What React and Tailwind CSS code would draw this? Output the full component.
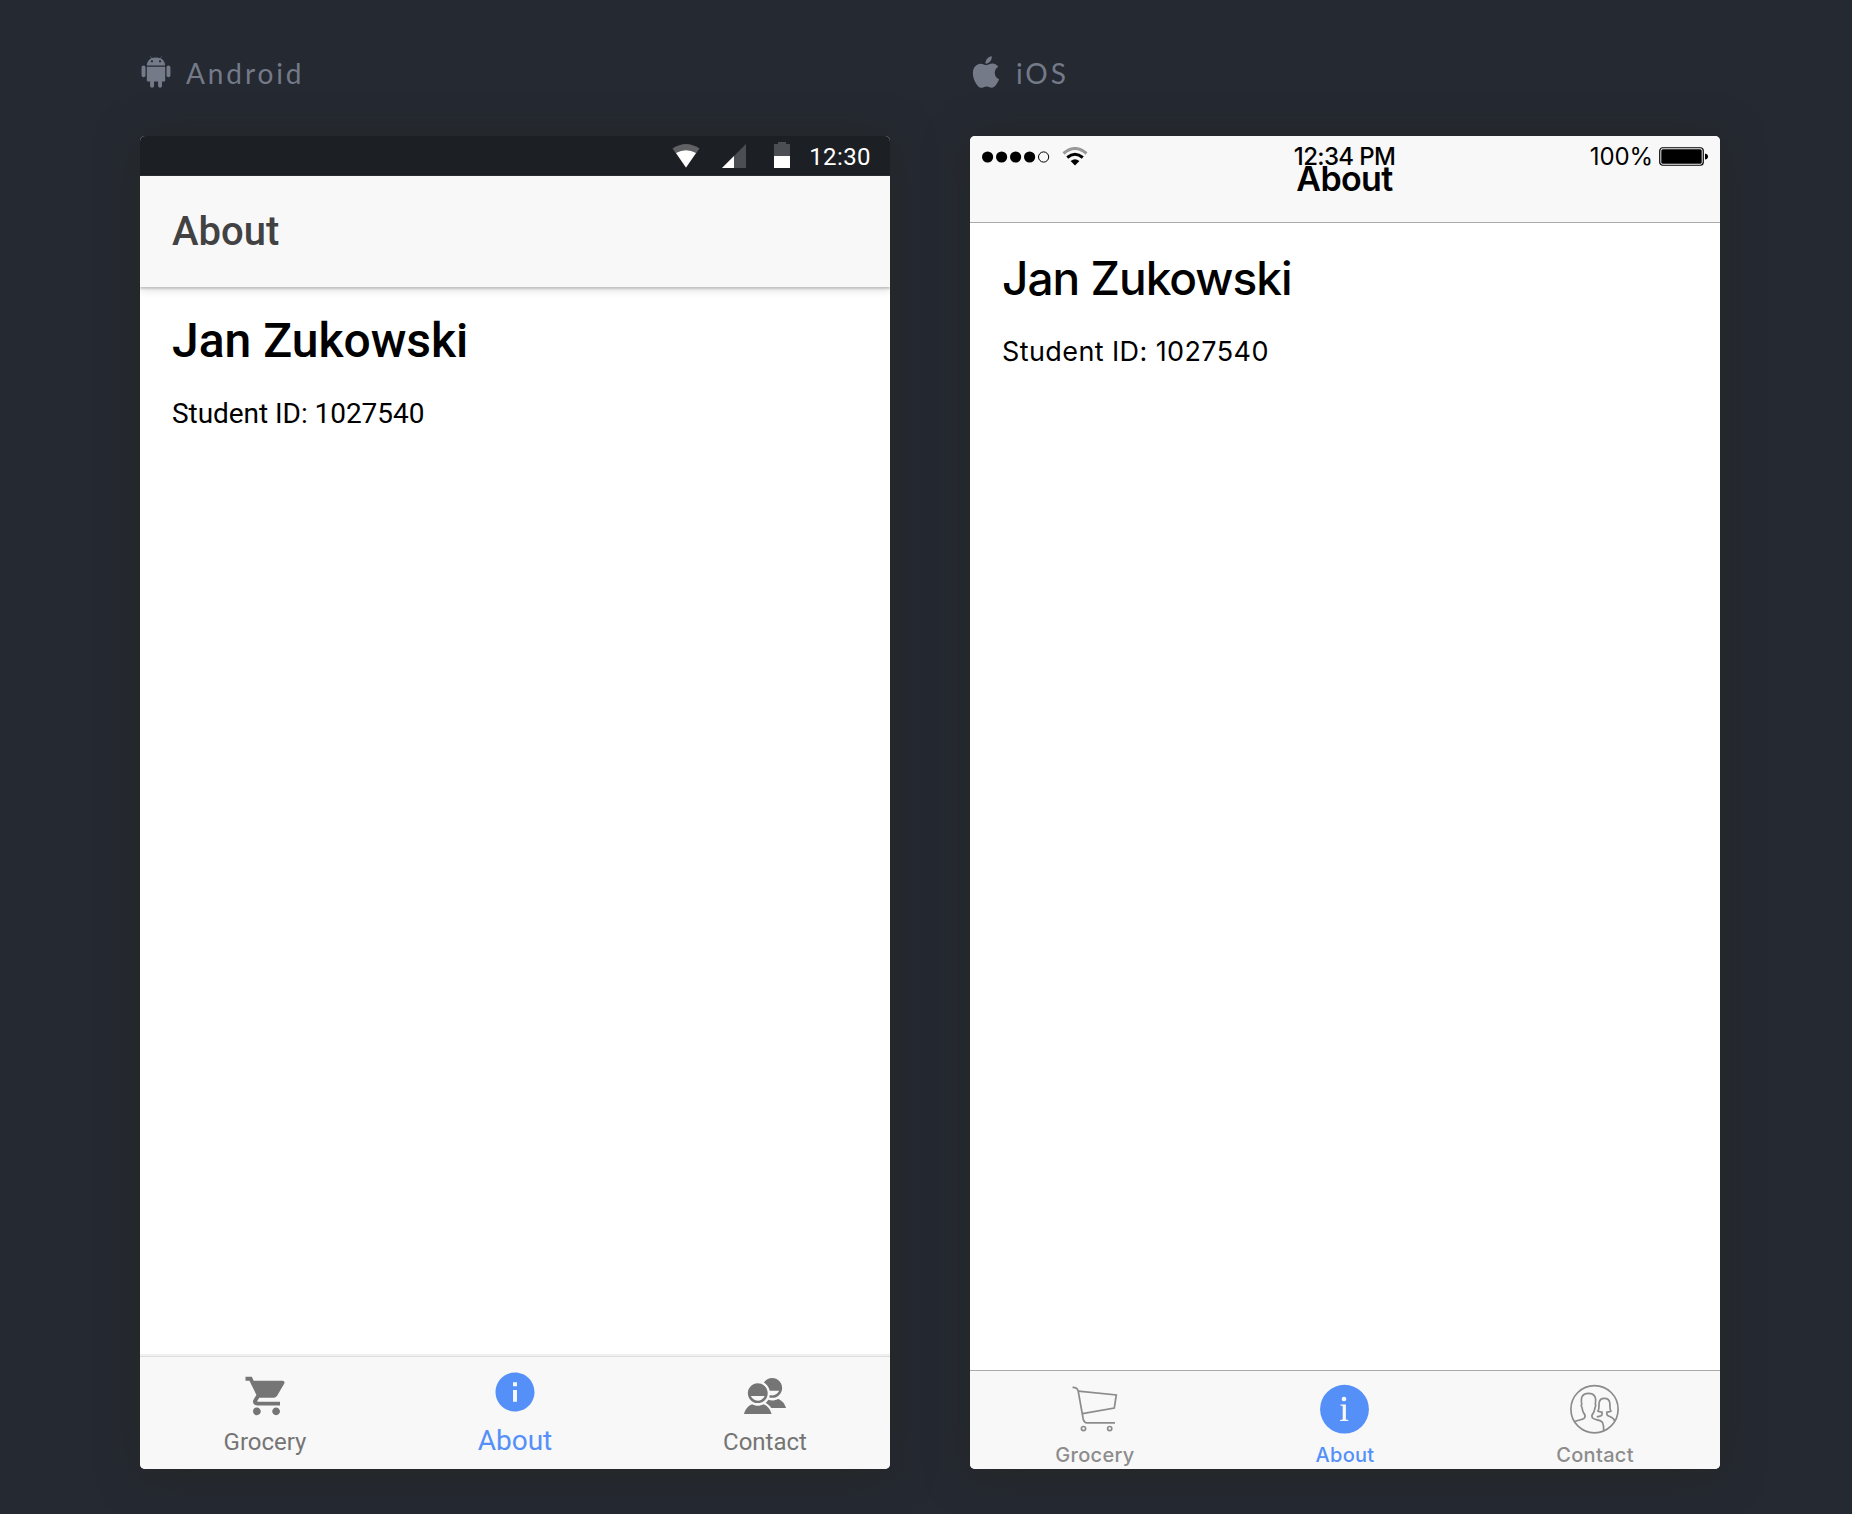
import React from "react";
import {
  IoLogoAndroid,
  IoLogoApple,
  IoMdCart,
  IoMdContacts,
  IoMdInformationCircle,
} from "react-icons/io";

function PlatformLabel({ icon, name }) {
  return (
    <div className="flex h-[136px] items-start text-[#747a88]">
      <div className="mt-[54px] flex h-9 w-8 items-center justify-center">{icon}</div>
      <span className="ml-[14px] mt-[55px] font-[Lato] text-[28px] leading-9 tracking-[2.9px]">
        {name}
      </span>
    </div>
  );
}

function AndroidStatusBar() {
  return (
    <div className="flex h-10 items-center border-b border-[#2a2d31] bg-[#1c1f24] pr-[19px] text-white">
      <svg className="ml-auto" width="28" height="24" viewBox="0 0 28 24">
        <path d="M.5 4.5Q14-4.500 27.500 4.500L14 23.500Z" fill="#5f6164" />
        <path d="M4 9Q14 3.500 24 9L14 23.500Z" fill="#fff" />
      </svg>
      <svg className="ml-[22px]" width="24" height="24" viewBox="0 0 24 24">
        <path d="M24 0V24H0Z" fill="#4b4e52" />
        <path d="M12 12V24H0Z" fill="#fff" />
      </svg>
      <svg className="mb-px ml-7" width="16" height="26" viewBox="0 0 16 26">
        <path d="M4 0h8v2h4v12H0V2h4z" fill="#4b4e52" />
        <path d="M0 14h16v12H0z" fill="#fff" />
      </svg>
      <span className="ml-[19px] mt-[3px] text-2xl leading-7 tracking-[0.4px]">12:30</span>
    </div>
  );
}

function AndroidTab({ icon, label, active }) {
  return active ? (
    <div className="flex flex-1 flex-col items-center pt-[11px] text-[#5490f8]">
      {icon}
      <span className="mt-[9px] text-[28px] leading-8">{label}</span>
    </div>
  ) : (
    <div className="flex flex-1 flex-col items-center pt-[15px] text-[#757575]">
      {icon}
      <span className="mt-[8px] text-2xl leading-7">{label}</span>
    </div>
  );
}

function AndroidDevice() {
  return (
    <div className="flex h-[1333px] w-[750px] flex-col overflow-hidden rounded-[5px] bg-white font-[Roboto] shadow-[0_4px_40px_rgba(36,40,36,0.9)]">
      <AndroidStatusBar />
      <header className="relative flex h-[111px] items-center bg-[#f8f8f8] pl-8 pt-px shadow-[0_2px_2px_rgba(0,0,0,0.18),0_4px_8px_rgba(0,0,0,0.1)]">
        <h1 className="text-[40px] font-medium leading-[48px] text-[#424242]">About</h1>
      </header>
      <main className="flex-1 px-8 pt-[26px]">
        <h2 className="text-[48px] font-medium leading-[56px] text-black">Jan Zukowski</h2>
        <p className="mt-[28px] text-[28px] leading-[34px] tracking-[-0.05px] text-black">Student ID: 1027540</p>
      </main>
      <nav className="flex h-[113px] border-t border-[#dedede] bg-[#f8f8f8] shadow-[0_-2px_1px_rgba(0,0,0,0.06)]">
        <AndroidTab icon={<IoMdCart size={48} />} label="Grocery" />
        <AndroidTab icon={<IoMdInformationCircle size={48} />} label="About" active />
        <AndroidTab icon={<IoMdContacts size={48} />} label="Contact" />
      </nav>
    </div>
  );
}

function IosStatusBar() {
  return (
    <div className="absolute inset-x-0 top-0 grid h-[41px] grid-cols-3 items-center text-2xl leading-7">
      <div className="flex items-center pl-3">
        <svg width="68" height="12" viewBox="0 0 68 12">
          <circle cx="5.600" cy="6" r="5.600" />
          <circle cx="19.600" cy="6" r="5.600" />
          <circle cx="33.600" cy="6" r="5.600" />
          <circle cx="47.600" cy="6" r="5.600" />
          <circle cx="61.600" cy="6" r="5.100" fill="none" stroke="#000" />
        </svg>
        <svg className="ml-3" width="26" height="19" viewBox="0 0 26 19" fill="none">
          <path d="M1.500 6.500Q13-3.500 24.500 6.500" stroke="#999" strokeWidth="3" />
          <path d="M5.200 10.500Q13 4 20.800 10.500" stroke="#000" strokeWidth="3" />
          <path d="M8.600 14Q13 10.500 17.400 14L13 18.500Z" fill="#000" />
        </svg>
      </div>
      <span className="-ml-px text-center font-medium tracking-[-0.65px]">12:34 PM</span>
      <div className="flex items-center justify-end pr-[11px]">
        <span className="tracking-[-0.1px]">100%</span>
        <svg className="ml-1.5 mt-px" width="50" height="20" viewBox="0 0 50 20">
          <rect x=".75" y=".75" width="43.500" height="17.500" rx="3" fill="none" stroke="#000" strokeWidth="1.200" />
          <rect x="2.300" y="2.300" width="40.400" height="14.400" rx="1.500" />
          <path d="M46 6.500Q49 7 49 9.500T46 12.500Z" />
        </svg>
      </div>
    </div>
  );
}

function CartOutline() {
  return (
    <svg width="60" height="60" viewBox="0 0 60 60" fill="none" stroke="currentColor" strokeWidth="1.700">
      <path d="M7.500 8.400C11 8.300 12.500 9 13.200 12L18.200 40Q19 43.800 22 43.800H50" />
      <path d="M13.300 12.200L51.300 16L49.300 29L17.500 34.700" />
      <circle cx="18.500" cy="49.600" r="2.100" />
      <circle cx="44.700" cy="49.600" r="2.100" />
    </svg>
  );
}

function InfoFilled() {
  return (
    <svg width="60" height="60" viewBox="0 0 60 60">
      <circle cx="29.500" cy="30.200" r="24.400" fill="currentColor" />
      <circle cx="29" cy="20" r="2.300" fill="#f8f8f8" />
      <path d="M25.400 25.400H30.900V40.400L33.300 41V42H25V41L27.700 40.400V27L25.400 26.400Z" fill="#f8f8f8" />
    </svg>
  );
}

function ContactsOutline() {
  return (
    <svg width="60" height="60" viewBox="0 0 60 60" fill="none" stroke="currentColor" strokeWidth="1.700">
      <circle cx="29.500" cy="30.200" r="23.600" />
      <path d="M10 42.600C13 40.800 18 41 19.500 39C20.400 37.500 20 35.500 18.800 34.200C17.500 32.500 17.500 30.500 17 28.500C16 27.500 16.200 26 16.700 25C15.500 18 17.500 14.300 23.500 14.300S31.500 18 30.300 25C30.800 26 31 27.500 30 28.500C29.500 30.500 29.500 32.500 28.200 34.200C27 35.500 26.600 37.500 27.500 39C29.500 41.200 36 40.600 37.500 43.500Q38.900 46.500 38.700 51.500" />
      <path d="M31.900 37.900C34 37 36.900 37.500 37 35.500V33.200C35.300 32.800 33.900 33 32.900 32.200C34.500 30 33.800 27 34.100 24C34.500 20.500 36 19.300 39.300 19.300S44.400 20.500 44.800 24C45.100 27 44.400 30 46 32.200C45 33 43.600 32.800 41.900 33.200V35.500C42.500 38 48.500 37.200 49.700 42" />
    </svg>
  );
}

function IosTab({ icon, label, active }) {
  return (
    <div className={"flex flex-1 flex-col items-center pt-[8px] " + (active ? "text-[#5490f8]" : "text-[#8c8c8c]")}>
      {icon}
      <span className="mt-[4px] text-xl font-medium leading-6 tracking-[0.3px]">{label}</span>
    </div>
  );
}

function IosDevice() {
  return (
    <div className="relative flex h-[1333px] w-[750px] flex-col overflow-hidden rounded-[5px] bg-white font-[Inter] text-black shadow-[0_4px_40px_rgba(36,40,36,0.9)]">
      <header className="flex h-[87px] justify-center border-b border-[#aaa] bg-[#f8f8f8] pt-[23px]">
        <h1 className="-ml-px text-[34px] font-semibold leading-10 tracking-[-0.6px]">About</h1>
      </header>
      <IosStatusBar />
      <main className="flex-1 px-8 pt-[27px]">
        <h2 className="text-[46px] font-medium leading-[56px] tracking-[-1px]">Jan Zukowski</h2>
        <p className="mt-[29px] text-[27px] leading-[34px] tracking-[0.4px]">Student ID: 1027540</p>
      </main>
      <nav className="flex h-[99px] border-t border-[#aaa] bg-[#f8f8f8]">
        <IosTab icon={<CartOutline />} label="Grocery" />
        <IosTab icon={<InfoFilled />} label="About" active />
        <IosTab icon={<ContactsOutline />} label="Contact" />
      </nav>
    </div>
  );
}

export default function App() {
  return (
    <div className="flex h-[1514px] w-[1852px] gap-20 overflow-hidden bg-[#252932] pl-[140px]">
      <section>
        <PlatformLabel icon={<IoLogoAndroid size={42} className="shrink-0" />} name="Android" />
        <AndroidDevice />
      </section>
      <section>
        <PlatformLabel icon={<IoLogoApple size={42} className="shrink-0" />} name="iOS" />
        <IosDevice />
      </section>
    </div>
  );
}
